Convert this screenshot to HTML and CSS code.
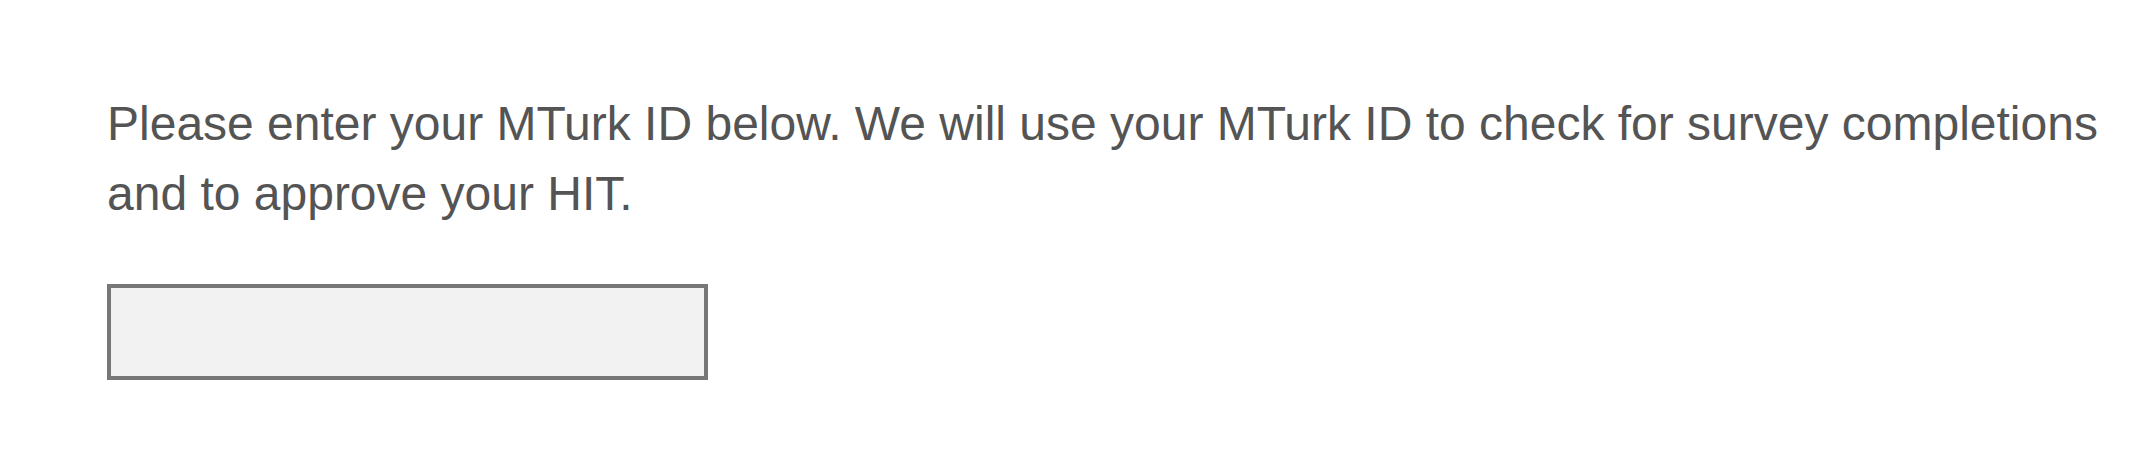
FILE: index.html
```html
<!DOCTYPE html>
<html>
<head>
<meta charset="utf-8">
<link rel="stylesheet" href="styles.css">
</head>
<body>
<main class="page">
  <p class="prompt">Please enter your MTurk ID below. We will use your MTurk ID to check for survey completions and to approve your HIT.</p>
  <input class="mturk-input" type="text" aria-label="MTurk ID">
</main>
</body>
</html>
```
FILE: styles.css
```css
html, body {
  margin: 0;
  padding: 0;
  background: #ffffff;
}
.page {
  padding: 89px 30px 0 107px;
  display: flex;
  flex-direction: column;
  align-items: flex-start;
  font-family: "Liberation Sans", Arial, sans-serif;
}
.prompt {
  margin: 0;
  font-size: 48px;
  line-height: 70px;
  color: #545454;
}
.mturk-input {
  margin-top: 55px;
  box-sizing: border-box;
  width: 601px;
  height: 96px;
  border: 4px solid #777777;
  background: #f2f2f2;
  border-radius: 0;
  padding: 0 16px;
  font-family: inherit;
  font-size: 40px;
  outline: none;
}
```
